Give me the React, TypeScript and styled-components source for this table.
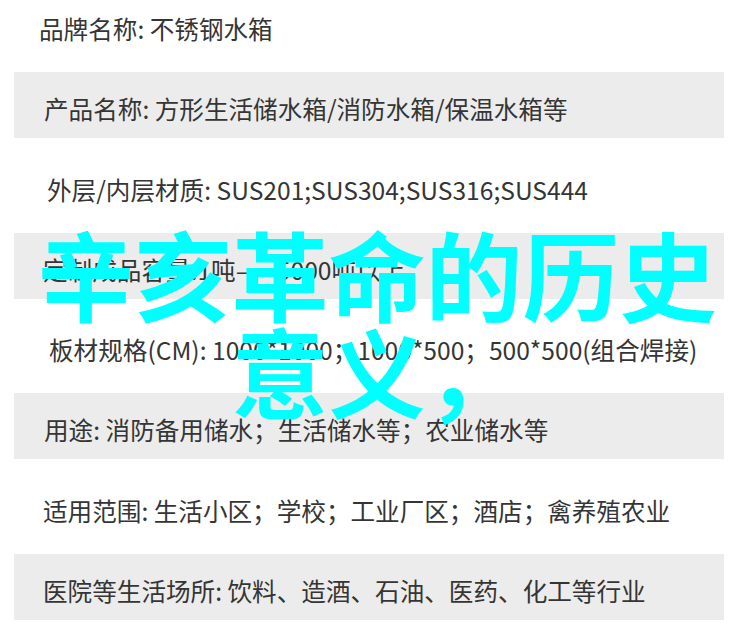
import { styled, createGlobalStyle } from 'styled-components';

const GlobalStyle = createGlobalStyle`
  html, body {
    margin: 0;
    padding: 0;
    background: #ffffff;
  }
  body {
    overflow: hidden;
  }
`;

const Page = styled.div`
  position: relative;
  width: 750px;
  height: 638px;
  overflow: hidden;
  background-color: #ffffff;
  font-family: 'Noto Sans CJK SC', 'Noto Sans', sans-serif;
`;

const SpecList = styled.ul`
  display: flex;
  flex-direction: column;
  gap: 14.3px;
  list-style: none;
  margin: -8px 0 0 0;
  padding: 0 26px 0 14px;
`;

const SpecRow = styled.li<{ $shaded: boolean; $indent: number }>`
  display: flex;
  align-items: center;
  height: 66px;
  box-sizing: border-box;
  padding: 6px 0 0 ${(p) => p.$indent}px;
  background-color: ${(p) => (p.$shaded ? '#ececec' : 'transparent')};
  font-size: 24.6px;
  color: #353535;
  white-space: nowrap;
`;

// big cyan caption laid over the spec table
const Headline = styled.h1`
  position: absolute;
  top: 223px;
  left: 0;
  width: 754px;
  margin: 0;
  text-align: center;
  font-family: 'Noto Sans CJK SC', sans-serif;
  font-size: 97px;
  line-height: 97px;
  font-weight: 700;
  color: #00ffff;
  pointer-events: none;
`;

const specs = [
  { text: '品牌名称: 不锈钢水箱', indent: 25 },
  { text: '产品名称: 方形生活储水箱/消防水箱/保温水箱等', indent: 30 },
  { text: '外层/内层材质: SUS201;SUS304;SUS316;SUS444', indent: 33 },
  { text: '定制成品容量:1吨——5000吨以上', indent: 29 },
  { text: '板材规格(CM): 1000*1000；1000*500；500*500(组合焊接)', indent: 35 },
  { text: '用途: 消防备用储水；生活储水等；农业储水等', indent: 30 },
  { text: '适用范围: 生活小区；学校；工业厂区；酒店；禽养殖农业', indent: 29 },
  { text: '医院等生活场所: 饮料、造酒、石油、医药、化工等行业', indent: 29 },
];

function App() {
  return (
    <>
      <GlobalStyle />
      <Page>
        <SpecList>
          {specs.map((spec, i) => (
            <SpecRow key={spec.text} $shaded={i % 2 === 1} $indent={spec.indent}>
              {spec.text}
            </SpecRow>
          ))}
        </SpecList>
        <Headline>
          辛亥革命的历史
          <br />
          意义，
        </Headline>
      </Page>
    </>
  );
}

export default App;
